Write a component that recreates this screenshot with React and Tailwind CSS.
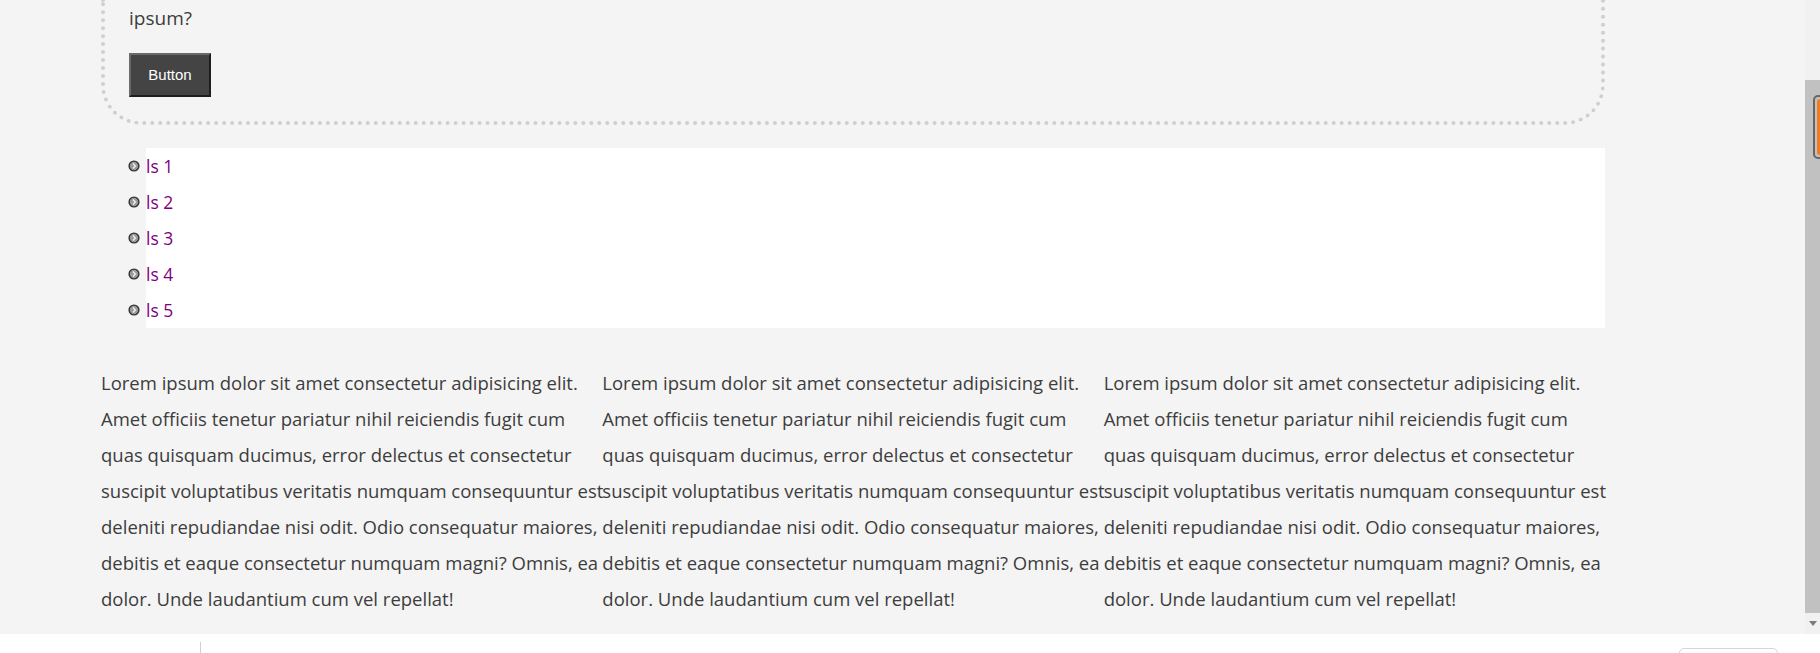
import React from 'react';

const lines = [
  "Lorem ipsum dolor sit amet consectetur adipisicing elit.",
  "Amet officiis tenetur pariatur nihil reiciendis fugit cum",
  "quas quisquam ducimus, error delectus et consectetur",
  "suscipit voluptatibus veritatis numquam consequuntur est",
  "deleniti repudiandae nisi odit. Odio consequatur maiores,",
  "debitis et eaque consectetur numquam magni? Omnis, ea",
  "dolor. Unde laudantium cum vel repellat!",
];

function Bullet() {
  return (
    <svg width="12" height="12" viewBox="0 0 12 12" className="absolute left-[-18px] top-[12px]">
      <circle cx="6" cy="6" r="4.9" fill="#9a9a9a" stroke="#333" strokeWidth="1.4" />
      <path d="M5 3.6 L7.3 6 L5 8.4" fill="none" stroke="#eeeeee" strokeWidth="1.4" />
    </svg>
  );
}

function App() {
  return (
    <div className="w-full h-[653px] overflow-hidden flex flex-col bg-white font-['Open_Sans',sans-serif] text-[#3d3d3d]">
      <div className="flex h-[634px] bg-[#f4f4f4] shrink-0">
        <div className="flex-1">
          <div className="ml-[101px] w-[1504px]">
            {/* dotted card, top is scrolled off */}
            <div className="border-4 border-t-0 border-dotted border-[#cfcfcf] rounded-b-[40px] px-6 pb-6">
              <p className="text-[19px] leading-[36px]">ipsum?</p>
              <button className="mt-[17px] w-[82px] h-[44px] bg-[#444] text-white text-[15px] font-['Liberation_Sans',sans-serif] border-2 border-t-[#6a6a6a] border-l-[#6a6a6a] border-r-[#1e1e1e] border-b-[#1e1e1e]">
                Button
              </button>
            </div>

            <ul className="mt-[23px] pl-[45px]">
              {[1, 2, 3, 4, 5].map(n => (
                <li key={n} className="relative bg-white h-[36px] leading-[36px] text-[17.5px] text-[#800080]">
                  <Bullet />
                  ls {n}
                </li>
              ))}
            </ul>

            <div className="mt-[37px] grid grid-cols-3">
              {[0, 1, 2].map(i => (
                <div key={i} className="text-[18.5px] leading-[36px]">
                  {lines.map((l, j) => (
                    <div key={j} className="whitespace-nowrap">{l}</div>
                  ))}
                </div>
              ))}
            </div>
          </div>
        </div>

        <div className="relative w-[15px] flex flex-col bg-[#f1f1f1]">
          <div className="h-[80px]"></div>
          <div className="flex-1 bg-[#c1c1c1]"></div>
          <div className="h-[21px] flex items-center justify-center">
            <svg width="8" height="5" viewBox="0 0 8 5"><path d="M0 0 H8 L4 5 Z" fill="#7a7a7a" /></svg>
          </div>
          <div className="absolute left-[8px] top-[95px] w-[20px] h-[64px] rounded-[5px] border-2 border-[#666] bg-[#c1c1c1] p-[2px]">
            <div className="h-full rounded-[3px] bg-[#f47a20]"></div>
          </div>
        </div>
      </div>

      <div className="relative flex-1 bg-white">
        <div className="absolute left-[200px] top-[8px] w-px h-[11px] bg-[#cfcfcf]"></div>
        <div className="absolute left-[1679px] top-[14px] w-[99px] h-[20px] rounded-[5px] border border-[#d6d6d6]"></div>
      </div>
    </div>
  );
}

export default App;
